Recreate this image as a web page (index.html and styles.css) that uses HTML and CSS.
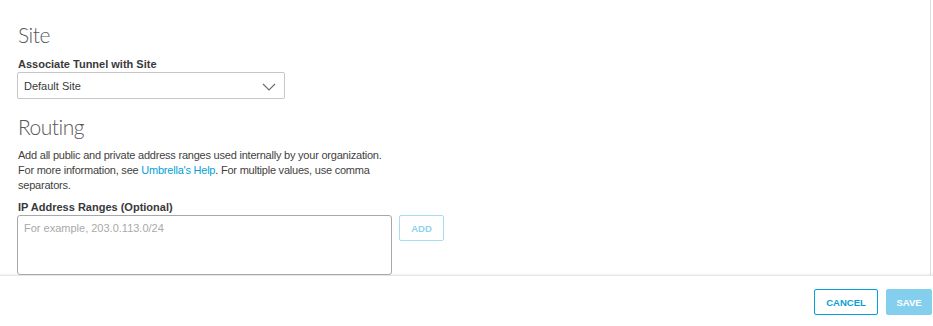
FILE: index.html
```html
<!DOCTYPE html>
<html lang="en">
<head>
  <meta charset="UTF-8" />
  <title>Tunnel</title>
  <link rel="stylesheet" href="styles.css">
</head>
<body>

  <div class="main">
    <div class="content">
      <h2>Site</h2>
      <label class="field-label">Associate Tunnel with Site</label>
      <div class="select">
        <span>Default Site</span>
        <svg width="14" height="8" viewBox="0 0 14 8"><path d="M1 1 L7 7 L13 1" fill="none" stroke="#6b6b6b" stroke-width="1.1"/></svg>
      </div>

      <h2 class="routing">Routing</h2>
      <p class="help">
        Add all public and private address ranges used internally by your organization.<br>
        For more information, see <a href="#">Umbrella's Help</a>. For multiple values, use comma<br>
        separators.
      </p>
      <label class="field-label ip-label">IP Address Ranges (Optional)</label>
      <div class="ip-row">
        <textarea placeholder="For example, 203.0.113.0/24"></textarea>
        <button class="add-btn">ADD</button>
      </div>
    </div>
  </div>

  <div class="footer">
    <button class="cancel">CANCEL</button>
    <button class="save">SAVE</button>
  </div>

</body>
</html>
```

FILE: styles.css
```css
* {
  box-sizing: border-box;
}

body {
  margin: 0;
  width: 933px;
  height: 326px;
  overflow: hidden;
  font-family: 'Liberation Sans', Arial, sans-serif;
  color: #39393b;
  background: #fff;
}

.main {
  height: 275px;
  overflow: hidden;
  border-right: 1px solid #dcdcdc;
  margin-right: 2px;
}

.content {
  padding: 21px 0 0 18px;
}

h2 {
  margin: 0;
  font-family: 'Lato', sans-serif;
  font-weight: 300;
  font-size: 21px;
  line-height: 28px;
  letter-spacing: -0.5px;
  color: #58585b;
}

.field-label {
  display: block;
  font-size: 11px;
  font-weight: bold;
  line-height: 14px;
  margin-top: 8px;
  margin-bottom: 1px;
  color: #39393b;
}

.ip-label {
  margin-top: 7px;
  margin-bottom: 1px;
}

.select {
  width: 268px;
  height: 27px;
  border: 1px solid #c6c6c6;
  border-radius: 2px;
  margin-left: -1px;
  display: flex;
  align-items: center;
  justify-content: space-between;
  padding: 0 8px 0 6px;
  font-size: 11px;
  color: #39393b;
}

.select svg {
  margin-top: 2px;
}

.routing {
  margin-top: 14px;
}

.help {
  margin: 7px 0 0;
  font-size: 11px;
  line-height: 15px;
  letter-spacing: -0.22px;
  white-space: nowrap;
  color: #3f3f41;
}

.help a {
  color: #049fd9;
  text-decoration: none;
}

.ip-row {
  display: flex;
  align-items: flex-start;
  gap: 7px;
  margin-left: -1px;
}

textarea {
  width: 375px;
  height: 60px;
  border: 1px solid #a8a8a8;
  border-radius: 3px;
  padding: 6px 6px;
  font-family: 'Liberation Sans', Arial, sans-serif;
  font-size: 11px;
  resize: none;
}

textarea::placeholder {
  color: #a9a9a9;
}

.add-btn {
  width: 45px;
  height: 26px;
  background: #fff;
  border: 1px solid #a6ddf2;
  border-radius: 2px;
  color: #8fd2ee;
  font-family: 'Liberation Sans', Arial, sans-serif;
  font-size: 9.5px;
  font-weight: bold;
  padding: 0;
}

.footer {
  height: 51px;
  border-top: 1px solid #e6e6e6;
  box-shadow: 0 -1px 2px rgba(0,0,0,0.06);
  display: flex;
  justify-content: flex-end;
  align-items: flex-start;
  gap: 8px;
  padding-top: 13px;
  padding-right: 1px;
}

.footer button {
  height: 26px;
  border-radius: 2px;
  font-family: 'Liberation Sans', Arial, sans-serif;
  font-size: 9.5px;
  font-weight: bold;
  padding: 0;
}

.cancel {
  width: 64px;
  background: #fff;
  border: 1px solid #049fd9;
  color: #049fd9;
}

.save {
  width: 46px;
  background: #84cfee;
  border: 1px solid #84cfee;
  color: #fff;
}
```
